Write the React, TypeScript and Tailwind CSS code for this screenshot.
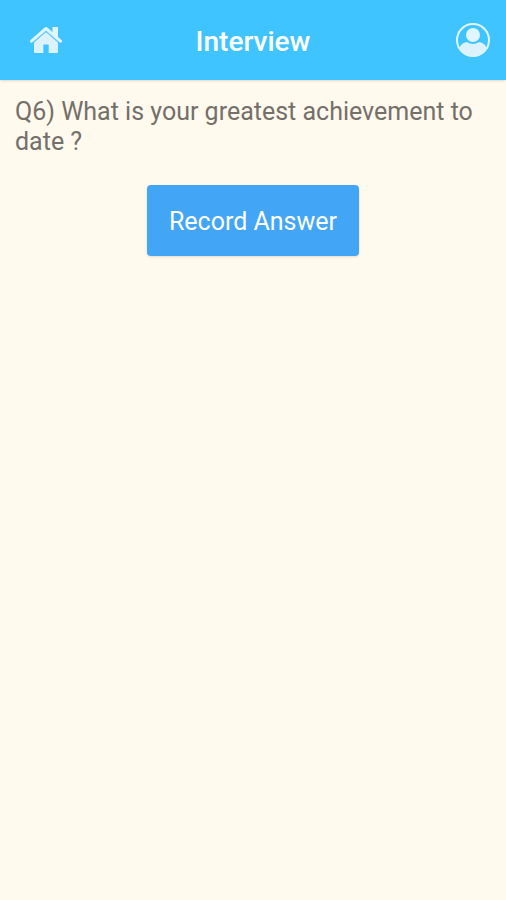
const question = {
  number: 6,
  text: 'What is your greatest achievement to date ?',
};

function HomeIcon() {
  return (
    <svg viewBox="0 0 34 28" className="h-7 w-[34px]" aria-hidden="true">
      <path
        d="M2.500 15.200 17 2.500 31.500 15.200"
        fill="none"
        stroke="#e1f5fe"
        strokeWidth="3"
        strokeLinecap="round"
        strokeLinejoin="round"
      />
      <path fill="#e1f5fe" d="M23.500 1h5.500v11l-5.500-5Z" />
      <path
        fill="#dcf3ff"
        d="M17 6 29 16.500V26q0 1-1 1H19.700v-8.500h-5.400V27H6q-1 0-1-1v-9.500Z"
      />
      <path d="M5 16.200 17 5.700 29 16.200" fill="none" stroke="#7fd4ff" strokeWidth="1" />
    </svg>
  );
}

function ProfileIcon() {
  return (
    <svg viewBox="0 0 36 36" className="size-9" aria-hidden="true">
      <circle cx="18" cy="18" r="16" fill="none" stroke="#e1f5fe" strokeWidth="2" />
      <circle cx="18" cy="13" r="7" fill="#e1f5fe" />
      <path
        fill="#dcf3ff"
        d="M4.500 26.500C5.500 22.500 8 20.500 12 20c3.500 2.500 8.500 2.500 12 0 4 .5 6.500 2.500 7.500 6.500A16 16 0 0 1 4.500 26.500Z"
      />
    </svg>
  );
}

export default function App() {
  return (
    <div className="min-h-screen bg-[#fff9ee] font-[Roboto,sans-serif]">
      {/* Header */}
      <header className="grid h-20 grid-cols-[1fr_auto_1fr] items-center bg-[#40c4ff] px-[15px] text-white shadow-sm">
        <a href="#home" aria-label="Home" className="justify-self-start px-3.5">
          <HomeIcon />
        </a>
        <h1 className="pt-1 text-[28px] font-medium">Interview</h1>
        <button type="button" aria-label="Profile" className="justify-self-end">
          <ProfileIcon />
        </button>
      </header>

      {/* Question */}
      <main className="flex flex-col items-center px-[15px] pt-[17px]">
        <p className="w-full text-[25px] leading-[30px] text-[#737069]">
          {`Q${question.number}) ${question.text}`}
        </p>
        <button
          type="button"
          className="mt-7 rounded-sm bg-[#42a5f5] px-[22px] pt-[19px] pb-4 text-[25px] leading-9 text-white shadow-sm"
        >
          Record Answer
        </button>
      </main>
    </div>
  );
}
